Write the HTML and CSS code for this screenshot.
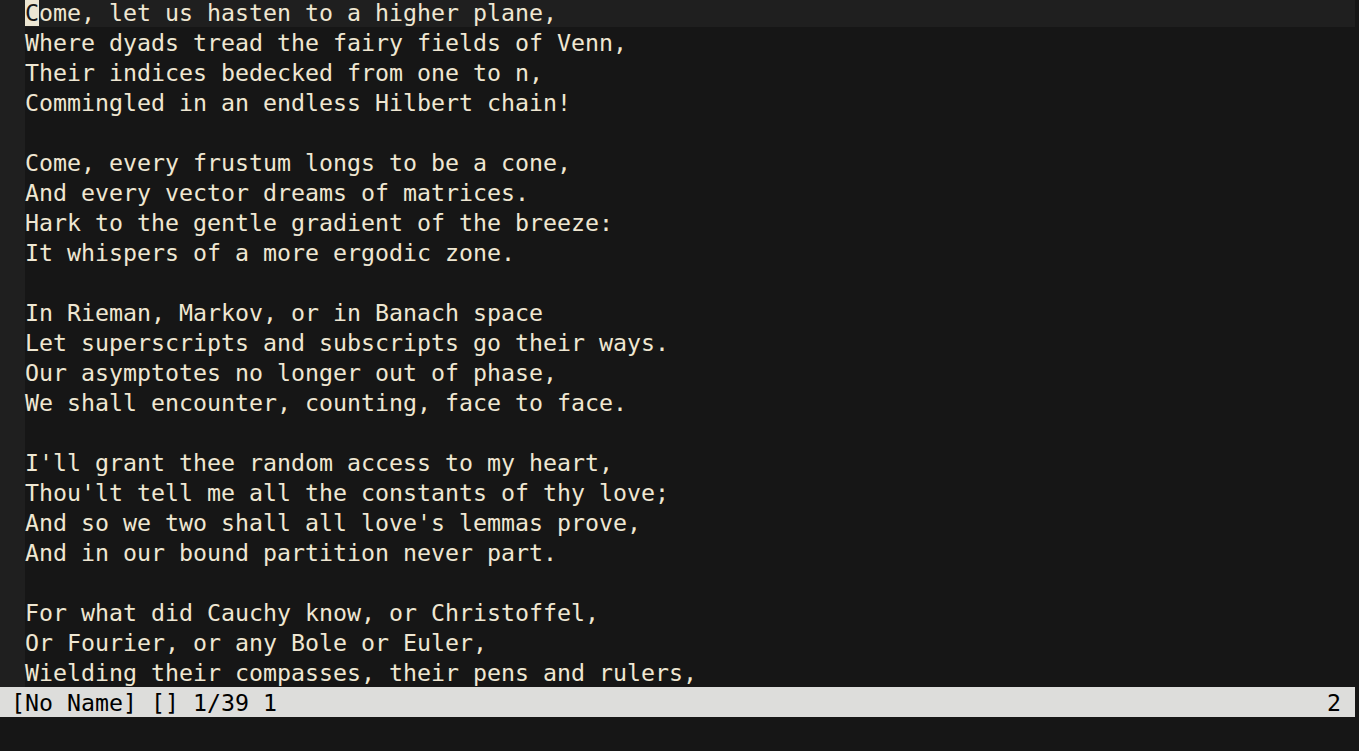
FILE: index.html
```html
<!DOCTYPE html>
<html>
<head>
<meta charset="utf-8">
<link rel="stylesheet" href="styles.css">
</head>
<body>
<div class="screen">
  <div class="window">
    <div class="gutter"></div>
    <div class="buffer">
      <div class="line cursorline"><span class="cursor">C</span>ome, let us hasten to a higher plane,</div>
      <div class="line">Where dyads tread the fairy fields of Venn,</div>
      <div class="line">Their indices bedecked from one to n,</div>
      <div class="line">Commingled in an endless Hilbert chain!</div>
      <div class="line"></div>
      <div class="line">Come, every frustum longs to be a cone,</div>
      <div class="line">And every vector dreams of matrices.</div>
      <div class="line">Hark to the gentle gradient of the breeze:</div>
      <div class="line">It whispers of a more ergodic zone.</div>
      <div class="line"></div>
      <div class="line">In Rieman, Markov, or in Banach space</div>
      <div class="line">Let superscripts and subscripts go their ways.</div>
      <div class="line">Our asymptotes no longer out of phase,</div>
      <div class="line">We shall encounter, counting, face to face.</div>
      <div class="line"></div>
      <div class="line">I'll grant thee random access to my heart,</div>
      <div class="line">Thou'lt tell me all the constants of thy love;</div>
      <div class="line">And so we two shall all love's lemmas prove,</div>
      <div class="line">And in our bound partition never part.</div>
      <div class="line"></div>
      <div class="line">For what did Cauchy know, or Christoffel,</div>
      <div class="line">Or Fourier, or any Bole or Euler,</div>
      <div class="line">Wielding their compasses, their pens and rulers,</div>
    </div>
  </div>
  <div class="statusline">
    <span class="status-left">[No Name] [] 1/39 1</span>
    <span class="status-right">2</span>
  </div>
  <div class="cmdline"></div>
</div>
</body>
</html>
```
FILE: styles.css
```css
html, body {
  margin: 0;
  padding: 0;
  background: #161616;
  overflow: hidden;
}
.screen {
  width: 1359px;
  height: 751px;
  overflow: hidden;
  font-family: "DejaVu Sans Mono", "Liberation Mono", monospace;
  font-size: 23.25px;
  color: #efe7d2;
}
.window {
  display: flex;
  width: 1355px;
  margin-top: -3px;
}
.gutter {
  width: 25px;
  background: #1f1f1f;
  flex: none;
}
.buffer {
  flex: 1;
  background: #161616;
}
.line {
  height: 30px;
  box-sizing: border-box;
  padding-top: 1px;
  line-height: 30px;
  white-space: pre;
}
.cursorline {
  background: #1f1f1f;
}
.cursor {
  background: #ece6d3;
  color: #161616;
}
.statusline {
  width: 1355px;
  height: 30px;
  box-sizing: border-box;
  padding: 1px 14px 0 11px;
  line-height: 30px;
  background: #dddddb;
  color: #000;
  display: flex;
  justify-content: space-between;
  white-space: pre;
}
.cmdline {
  height: 34px;
}
```
